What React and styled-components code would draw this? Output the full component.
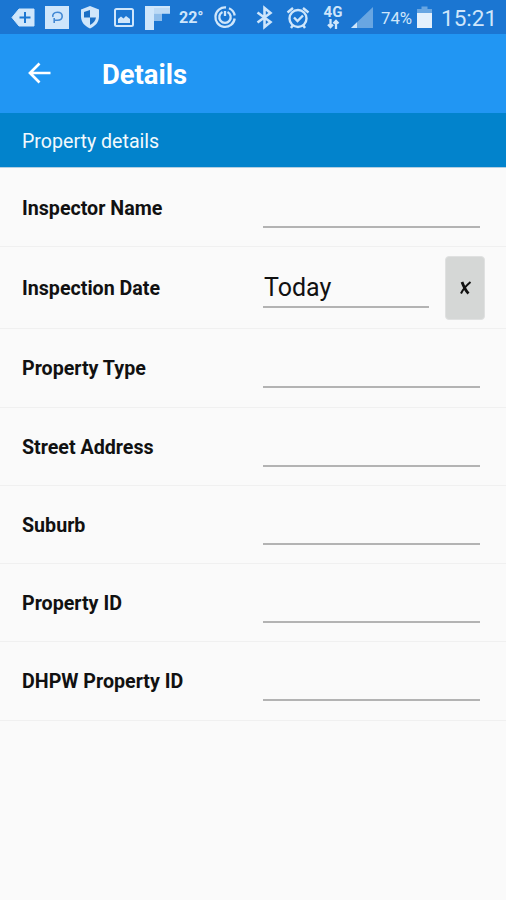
import React from 'react';
import styled, { createGlobalStyle } from 'styled-components';

const GlobalStyle = createGlobalStyle`
  * {
    box-sizing: border-box;
  }

  body {
    margin: 0;
    background: #fafafa;
    font-family: Roboto, "Liberation Sans", sans-serif;
  }
`;

const Screen = styled.div`
  width: 506px;
  height: 900px;
  overflow: hidden;
  background: #fafafa;
  color: #111;
`;

const StatusBar = styled.div`
  height: 34px;
  padding-left: 11px;
  display: flex;
  align-items: center;
  background: #1b76d2;
  color: #cfe6fb;
`;

const StatusIcon = styled.svg`
  display: block;
  flex: none;
  width: ${props => props.$width || 24}px;
  height: 26px;
  margin-left: ${props => props.$gap || 0}px;
`;

const StatusText = styled.span`
  flex: none;
  width: ${props => props.$width}px;
  margin-left: ${props => props.$gap}px;
  padding-top: ${props => props.$drop || 0}px;
  font-size: ${props => props.$size}px;
  font-weight: ${props => props.$weight || 400};
  line-height: 26px;
  white-space: nowrap;
`;

const Network = styled.div`
  flex: none;
  width: 20px;
  margin-left: 13px;
  display: flex;
  flex-direction: column;
  align-items: center;
  font-size: 15px;
  font-weight: 700;
  line-height: 14px;
`;

const Arrows = styled.svg`
  display: block;
  width: 14px;
  height: 10px;
`;

const AppBar = styled.header`
  height: 79px;
  padding-left: 26px;
  display: flex;
  align-items: center;
  background: #2196f3;
  color: #fff;
`;

const BackButton = styled.button`
  width: 26px;
  height: 26px;
  margin-top: -2px;
  padding: 0;
  border: 0;
  background: none;
  color: inherit;

  svg {
    display: block;
  }
`;

const Title = styled.h1`
  margin: 2px 0 0 50px;
  font-size: 27.4px;
  font-weight: 700;
  line-height: 32px;
`;

const SectionHeader = styled.h2`
  height: 55px;
  margin: 0;
  padding: 2px 22px 0;
  display: flex;
  align-items: center;
  background: #0283cc;
  border-bottom: 1px solid #b3cfe2;
  color: #f2f9fd;
  font-size: 19.6px;
  font-weight: 400;
`;

const Row = styled.div`
  height: ${props => props.$height}px;
  padding-left: 22px;
  display: grid;
  grid-template-columns: 241px 1fr;
  align-items: center;
  border-bottom: 1px solid #f0f0f0;

  &:first-of-type {
    padding-top: 1px;
  }
`;

const Label = styled.label`
  padding-top: 2px;
  font-size: 19.65px;
  font-weight: 700;
  line-height: 24px;
`;

const Field = styled.div`
  display: flex;
  align-items: center;
`;

const Input = styled.input`
  width: ${props => props.$width || 217}px;
  height: 40px;
  padding: 2px 0 0 1px;
  border: 0;
  border-bottom: 2px solid #b3b3b3;
  border-radius: 0;
  outline: 0;
  background: none;
  color: #111;
  font: 25px Roboto, "Liberation Sans", sans-serif;
`;

const ClearButton = styled.button`
  width: 40px;
  height: 64px;
  margin-left: 16px;
  padding: 0;
  border: 1px solid #e0e1e1;
  border-radius: 4px;
  background: #d5d7d6;
  display: flex;
  align-items: center;
  justify-content: center;
`;

const fields = [
  { id: 'inspector', label: 'Inspector Name', height: 79 },
  { id: 'date', label: 'Inspection Date', height: 82, value: 'Today' },
  { id: 'type', label: 'Property Type', height: 79 },
  { id: 'street', label: 'Street Address', height: 78 },
  { id: 'suburb', label: 'Suburb', height: 78 },
  { id: 'property', label: 'Property ID', height: 78 },
  { id: 'dhpw', label: 'DHPW Property ID', height: 79 }
];

const Status = () => (
  <StatusBar>
    <StatusIcon viewBox="0 0 24 26">
      <path d="M8 5h15v17H8L1 13.5z" fill="currentColor" stroke="currentColor" strokeLinejoin="round" />
      <path d="M14 8v11M8.500 13.500h11" stroke="#1b76d2" strokeWidth="2" />
    </StatusIcon>
    <StatusIcon $gap={10} viewBox="0 0 24 26">
      <path d="M0 2h24v23H0z" fill="currentColor" />
      <path d="M9.200 19V14M8 13C7 10.500 9 8.200 12.300 8.200S17.200 10 17.200 12.300 15.500 16.300 12.500 16.300H9.500" fill="none" stroke="#4389d4" strokeWidth="1.600" />
    </StatusIcon>
    <StatusIcon $gap={10} $width={22} viewBox="0 0 22 26">
      <path d="M11 2l9 3.500v7c0 5.500-3.500 9.500-9 12-5.500-2.500-9-6.500-9-12v-7z" fill="currentColor" />
      <path d="M11 6v7.500H5V8zM11 13.500h6c-.5 3.200-2.500 5.500-6 7.500z" fill="#1b6fc5" />
    </StatusIcon>
    <StatusIcon $gap={12} $width={22} viewBox="0 0 22 26">
      <rect x="2" y="5" width="18" height="17" rx="1.500" fill="none" stroke="currentColor" strokeWidth="2" />
      <path d="M5 19v-4l3-2.500 2.500 2 2.500-2.500 4 3V19z" fill="currentColor" />
    </StatusIcon>
    <StatusIcon $gap={10} $width={25} viewBox="0 0 25 26">
      <path d="M0 2h25v7.500h-8V17H9v9H0z" fill="currentColor" />
      <path d="M9 9.500h8V17H9z" fill="#8fbdea" />
      <path d="M9 4h16v5.500H9z" fill="#bddaf5" />
    </StatusIcon>
    <StatusText $gap={9} $width={25} $size={16} $weight={700} $drop={2}>22°</StatusText>
    <StatusIcon $gap={9} viewBox="0 0 24 26">
      <g fill="none" stroke="currentColor" strokeWidth="2.300">
        <path d="M13 3.500A9.700 9.700 0 1 0 21.700 14.500M16 4.200A9.700 9.700 0 0 1 21.700 11.500" />
        <path d="M9.500 8A5.700 5.700 0 1 0 14.500 8" />
        <path d="M12 7v5" />
      </g>
    </StatusIcon>
    <StatusIcon $gap={18} $width={18} viewBox="0 0 18 26">
      <path d="M2.500 8.500l13 9.500L9.500 23V4l6 5-13 9.500" fill="none" stroke="currentColor" strokeWidth="2.600" />
    </StatusIcon>
    <StatusIcon $gap={13} viewBox="0 0 24 26">
      <g fill="none" stroke="currentColor" strokeWidth="2.400">
        <circle cx="12" cy="14.500" r="8.500" />
        <path d="M8 13.500l3.500 3.500 5.500-5.500M1.500 8.500L7 4M22.500 8.500L17 4M5 24l2-3M19 24l-2-3" />
      </g>
    </StatusIcon>
    <Network>
      4G
      <Arrows viewBox="0 0 14 10" fill="none" stroke="currentColor" strokeWidth="2.300">
        <path d="M4.500 0v8M2 5.500L4.500 8 7 5.500M10 10V2M7.500 4.500L10 2l2.500 2.500" />
      </Arrows>
    </Network>
    <StatusIcon $gap={7} viewBox="0 0 24 26">
      <path d="M23 3v21H1z" fill="#68a6e2" />
      <path d="M7 18.300V24H1z" fill="currentColor" />
    </StatusIcon>
    <StatusText $gap={7} $width={32} $size={16.800} $drop={2}>74%</StatusText>
    <StatusIcon $gap={4} $width={15} viewBox="0 0 15 26">
      <path d="M4.500 2.500h6V5H15v4H0V5h4.500z" fill="#68a6e2" />
      <path d="M0 9h15v15H0z" fill="#e3f0fc" />
    </StatusIcon>
    <StatusText $gap={9} $width={56} $size={22.500} $drop={2}>15:21</StatusText>
  </StatusBar>
);

const App = () => (
  <>
    <GlobalStyle />
    <Screen>
      <Status />
      <AppBar>
        <BackButton aria-label="Back">
          <svg width="26" height="26" viewBox="0 0 26 26" fill="none" stroke="currentColor" strokeWidth="2.700">
            <path d="M24.500 13H4M13.500 3.500L4 13l9.500 9.500" />
          </svg>
        </BackButton>
        <Title>Details</Title>
      </AppBar>
      <SectionHeader>Property details</SectionHeader>
      <main>
        {fields.map(({ id, label, height, value }) => (
          <Row key={id} $height={height}>
            <Label htmlFor={id}>{label}</Label>
            <Field>
              <Input id={id} defaultValue={value} $width={value ? 166 : 217} />
              {value && (
                <ClearButton aria-label="Clear date">
                  <svg width="13" height="16" viewBox="0 0 13 16" fill="none" stroke="#111">
                    <path d="M3 2c1.500 4 3 8 6.500 11.500" strokeWidth="2.800" />
                    <path d="M11.500 2C8 5 4 9 2 13.500" strokeWidth="2" />
                  </svg>
                </ClearButton>
              )}
            </Field>
          </Row>
        ))}
      </main>
    </Screen>
  </>
);

export default App;
